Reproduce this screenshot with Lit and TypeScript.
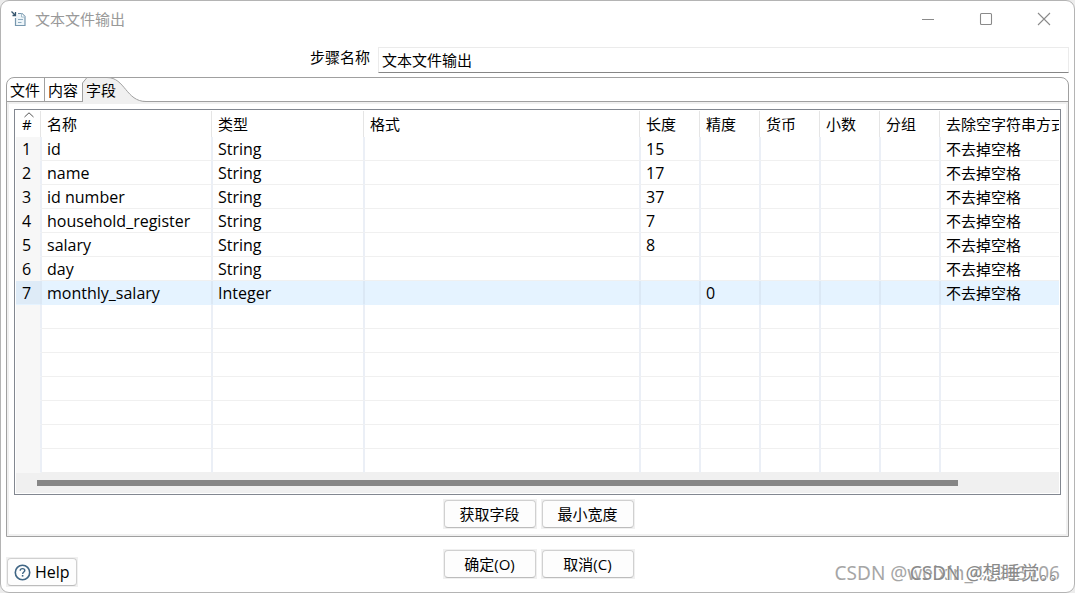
import { LitElement, html, css, svg } from "lit";
import { customElement, property, state } from "lit/decorators.js";

interface Column {
  title: string;
  width: number;
}

const COLUMNS: Column[] = [
  { title: "#", width: 25 },
  { title: "名称", width: 171 },
  { title: "类型", width: 152 },
  { title: "格式", width: 276 },
  { title: "长度", width: 60 },
  { title: "精度", width: 60 },
  { title: "货币", width: 60 },
  { title: "小数", width: 60 },
  { title: "分组", width: 60 },
  { title: "去除空字符串方式", width: 136 },
];

const TRIM = "不去掉空格";

const ROWS: string[][] = [
  ["id", "String", "", "15", "", "", "", "", TRIM],
  ["name", "String", "", "17", "", "", "", "", TRIM],
  ["id number", "String", "", "37", "", "", "", "", TRIM],
  ["household_register", "String", "", "7", "", "", "", "", TRIM],
  ["salary", "String", "", "8", "", "", "", "", TRIM],
  ["day", "String", "", "", "", "", "", "", TRIM],
  ["monthly_salary", "Integer", "", "", "0", "", "", "", TRIM],
];

const VISIBLE_ROWS = 14;

@customElement("field-table")
export class FieldTable extends LitElement {
  @state() private selected = 6;

  static styles = css`
    :host {
      display: flex;
      flex-direction: column;
      border: 1px solid #828790;
      padding: 1px;
      background: #fff;
      min-width: 0;
    }
    .viewport {
      flex: 1;
      overflow: hidden;
    }
    table {
      border-collapse: separate;
      border-spacing: 0;
      table-layout: fixed;
      width: 1060px;
    }
    th,
    td {
      box-sizing: border-box;
      font-weight: 400;
      text-align: left;
      white-space: nowrap;
      overflow: hidden;
      padding: 0 0 0 5px;
    }
    th {
      height: 26px;
      line-height: 26px;
      padding-left: 6px;
      border-right: 1px solid #e5e5e5;
    }
    td {
      height: 24px;
      line-height: 21px;
      padding-top: 2px;
      font-size: 16px;
      border-bottom: 1px solid #f0f0f0;
      border-right: 1px solid #ebeff6;
      border-left: 1px solid #ebeff6;
    }
    td:last-child {
      font-size: 15px;
    }
    th.index {
      position: relative;
    }
    .sort {
      position: absolute;
      left: 8px;
      top: 1px;
    }
    td.index {
      background: #f7f7f7;
      border-left: 0;
      border-bottom-color: #f7f7f7;
      padding-left: 6px;
    }
    tr.selected td {
      background: #e5f3ff;
      border-color: #dbe8f5;
      border-bottom-color: #e5f3ff;
    }
    tr.selected td.index {
      background: #deebf7;
    }
    .track {
      background: #f0f0f0;
      height: 20px;
      display: flex;
      align-items: center;
      padding: 0 21px;
    }
    .thumb {
      height: 6px;
      width: 92%;
      background: #868686;
    }
  `;

  render() {
    return html`
      <div class="viewport">
        <table>
          <colgroup>
            ${COLUMNS.map((c) => html`<col style="width:${c.width}px" />`)}
          </colgroup>
          <thead>
            <tr>
              ${COLUMNS.map(
                (c, i) => html`<th class=${i === 0 ? "index" : ""} scope="col">
                  ${i === 0
                    ? html`<svg class="sort" width="10" height="6" aria-hidden="true">
                        <path d="M.5 5 5 .8 9.5 5" fill="none" stroke="#555" />
                      </svg>`
                    : null}${c.title}
                </th>`
              )}
            </tr>
          </thead>
          <tbody>
            ${Array.from({ length: VISIBLE_ROWS }, (_, r) => {
              const row = ROWS[r];
              return html`<tr
                class=${r === this.selected ? "selected" : ""}
                @click=${() => row && (this.selected = r)}
              >
                <td class="index">${row ? r + 1 : ""}</td>
                ${COLUMNS.slice(1).map((_c, i) => html`<td>${row ? row[i] : ""}</td>`)}
              </tr>`;
            })}
          </tbody>
        </table>
      </div>
      <div class="track"><div class="thumb"></div></div>
    `;
  }
}

@customElement("push-button")
export class PushButton extends LitElement {
  @property() label = "";
  @property({ type: Boolean }) help = false;

  static styles = css`
    :host {
      display: block;
      background: #f0f0f0;
      padding: 1px;
    }
    button {
      font: inherit;
      color: #000;
      box-sizing: border-box;
      min-width: 92px;
      height: 28px;
      padding: 0;
      border: 1px solid #d0d0d0;
      border-bottom-color: #bcbcbc;
      border-radius: 4px;
      background: #fdfdfd;
      display: flex;
      align-items: center;
      justify-content: center;
      gap: 4px;
    }
    button.help {
      min-width: 0;
      padding: 0 6px;
      font-size: 16px;
    }
  `;

  render() {
    return html`<button type="button" class=${this.help ? "help" : ""}>
      ${this.help
        ? html`<svg width="17" height="17" viewBox="0 0 17 17" aria-hidden="true">
            <circle cx="8.5" cy="8.5" r="7.2" fill="none" stroke="#3f6584" stroke-width="1.6" />
            <path
              d="M6.2 6.7C6.2 5.3 7.1 4.6 8.5 4.6S10.8 5.4 10.8 6.6C10.8 8 8.6 8.1 8.6 10"
              fill="none"
              stroke="#3f6584"
              stroke-width="1.4"
            />
            <rect x="7.8" y="11" width="1.6" height="1.6" fill="#3f6584" />
          </svg>`
        : null}${this.label}
    </button>`;
  }
}

@customElement("app-root")
export class AppRoot extends LitElement {
  @state() private stepName = "文本文件输出";

  static styles = css`
    :host {
      display: block;
      background: #ececec;
      font: 15px/20px "Open Sans", "Noto Sans CJK SC", sans-serif;
      color: #000;
    }
    .window {
      box-sizing: border-box;
      min-height: 100vh;
      display: flex;
      flex-direction: column;
      border: 1px solid #b4b4b4;
      border-radius: 9px;
      background: #fff;
      padding: 0 5px;
      position: relative;
      overflow: hidden;
    }
    .titlebar {
      display: flex;
      align-items: center;
      height: 36px;
      padding-left: 5px;
      color: #999;
    }
    .titlebar h1 {
      flex: 1;
      margin: 0 0 0 8px;
      font: inherit;
    }
    .control {
      width: 58px;
      height: 36px;
      padding: 0;
      border: 0;
      background: none;
      display: flex;
      align-items: center;
      justify-content: center;
    }
    .control:last-child {
      margin-right: -4px;
    }
    .step {
      display: grid;
      grid-template-columns: 345fr 655fr;
      column-gap: 8px;
      margin-top: 10px;
    }
    .step label {
      text-align: right;
      line-height: 21px;
    }
    .step input {
      font: inherit;
      box-sizing: border-box;
      width: 100%;
      height: 26px;
      padding: 0 3px 2px;
      border: 1px solid #ebebeb;
      border-bottom-color: #868686;
      outline: 0;
      color: #000;
    }
    .folder {
      flex: 1;
      display: flex;
      flex-direction: column;
      margin-top: 4px;
      border: 1px solid #a0a0a0;
      border-radius: 8px 8px 0 0;
    }
    .tabs {
      display: flex;
      height: 23px;
      border-bottom: 1px solid #a0a0a0;
    }
    .tab {
      font: inherit;
      color: #000;
      border: 0;
      border-right: 1px solid #a0a0a0;
      background: none;
      padding: 0 4px 0 3px;
      height: 23px;
      line-height: 24px;
    }
    .tab.middle {
      border-right: 0;
    }
    .tab.active {
      position: relative;
      border: 0;
      width: 65px;
      padding: 0 0 0 4px;
      text-align: left;
    }
    .tab.active svg {
      position: absolute;
      left: 0;
      top: -1px;
    }
    .tab.active span {
      position: relative;
    }
    .page {
      flex: 1;
      display: flex;
      flex-direction: column;
      border: 2px solid #f0f0f0;
      padding: 5px;
    }
    field-table {
      flex: 1;
    }
    .actions {
      display: flex;
      justify-content: center;
      gap: 4px;
      padding-left: 2px;
    }
    .page .actions {
      margin-top: 4px;
    }
    .footer {
      display: grid;
      grid-template-columns: 1fr auto 1fr;
      padding: 12px 0 5px;
    }
    .footer push-button[help] {
      justify-self: start;
      margin-top: 8px;
    }
    .footer .actions {
      align-self: start;
    }
    .mark {
      position: absolute;
      right: 14px;
      bottom: 7px;
      font: 19px/24px "Noto Sans", "Noto Sans CJK SC", sans-serif;
      color: #a6a6a6;
      white-space: nowrap;
      pointer-events: none;
      text-shadow: 1px 1px 0 #fff;
    }
    .mark.over {
      right: 6px;
      color: #8a8a8a;
    }
  `;

  private glyph(d: string) {
    return svg`<svg width="14" height="14" viewBox="0 0 14 14" aria-hidden="true">
      <path d=${d} fill="none" stroke="#8a8a8a" stroke-width="1.1" />
    </svg>`;
  }

  render() {
    return html`
      <main class="window">
        <header class="titlebar">
          <svg width="16" height="16" viewBox="0 0 16 16" aria-hidden="true">
            <path d="M4.5 7v7.5h9.5v-9L11 2.5H7" fill="#eef5f9" stroke="#7797ae" stroke-width="1.2" />
            <path d="M10.5 2.5V6h3.5" fill="#fff" stroke="#a3bdcc" />
            <path d="M7 8.5h5M7 11.5h3.5" stroke="#8eacc0" />
            <path d="M.5.5 4 4M4.5 1v3.5h-3" fill="none" stroke="#36566e" stroke-width="1.3" />
          </svg>
          <h1>文本文件输出</h1>
          <button class="control" aria-label="最小化">${this.glyph("M1 7.5h12")}</button>
          <button class="control" aria-label="最大化">${this.glyph("M1.5 2.5q0-1 1-1h9q1 0 1 1v9q0 1-1 1h-9q-1 0-1-1z")}</button>
          <button class="control" aria-label="关闭">${this.glyph("M1 1l12 12M13 1 1 13")}</button>
        </header>

        <div class="step">
          <label for="step">步骤名称</label>
          <input
            id="step"
            .value=${this.stepName}
            @input=${(e: Event) => (this.stepName = (e.target as HTMLInputElement).value)}
          />
        </div>

        <section class="folder">
          <div class="tabs" role="tablist">
            <button class="tab" role="tab" aria-selected="false">文件</button>
            <button class="tab middle" role="tab" aria-selected="false">内容</button>
            <button class="tab active" role="tab" aria-selected="true">
              <svg width="65" height="25" viewBox="0 0 65 25" aria-hidden="true">
                <path
                  d="M.5 25V6L5 .5H25C43 .5 44 24.5 64 24.5V25z"
                  fill="#f0f0f0"
                />
                <path
                  d="M.5 25V6L5 .5H25C43 .5 44 24.5 64 24.5"
                  fill="none"
                  stroke="#a0a0a0"
                />
              </svg>
              <span>字段</span>
            </button>
          </div>
          <div class="page" role="tabpanel">
            <field-table></field-table>
            <div class="actions">
              <push-button label="获取字段"></push-button>
              <push-button label="最小宽度"></push-button>
            </div>
          </div>
        </section>

        <footer class="footer">
          <push-button help label="Help"></push-button>
          <div class="actions">
            <push-button label="确定(O)"></push-button>
            <push-button label="取消(C)"></push-button>
          </div>
        </footer>

        <div class="mark">CSDN @weixin_45963106</div>
        <div class="mark over">CSDN @想睡觉。。</div>
      </main>
    `;
  }
}
